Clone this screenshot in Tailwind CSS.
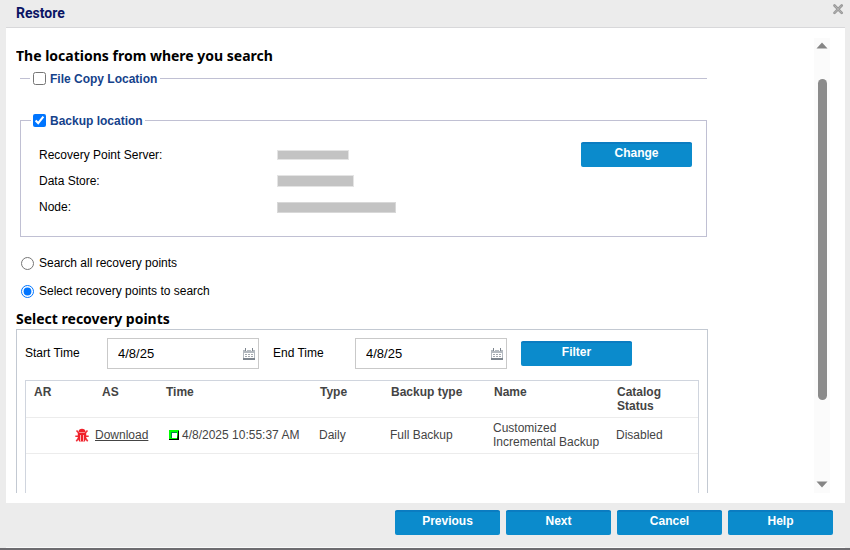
<!DOCTYPE html>
<html lang="en">
<head>
<meta charset="utf-8">
<meta name="viewport" content="width=device-width, initial-scale=1">
<title>Restore</title>
<script src="https://cdn.jsdelivr.net/npm/@tailwindcss/browser@4"></script>
</head>
<body class="font-['Liberation_Sans',Arial,sans-serif] text-xs leading-[14px] text-black">
<div class="flex h-screen flex-col border-b-2 border-[#6d6c70] bg-[#ececec] pr-[5px] pl-1.5">
  <header class="flex h-7 shrink-0 items-start justify-between border-b border-[#d8d8da] pl-2.5">
    <h1 class="pt-[5px] font-[Roboto,sans-serif] text-sm leading-4 font-bold text-[#0a1464]">Restore</h1>
    <button type="button" aria-label="Close" class="pt-[3px]">
      <svg class="block size-3" viewBox="0 0 12 12" fill="none" stroke-linecap="round"><path d="M1.500 2.500l7.200 7.400M8.700 2.500L1.500 9.900" stroke="#999" stroke-width="2.600"/><path d="M1.800 2.800l6.600 6.800M8.400 2.800l-6.600 6.800" stroke="#b4b4b4" stroke-width="1"/></svg>
    </button>
  </header>

  <main class="flex min-h-0 flex-1 bg-white pt-2.5 pr-[15px] pb-2.5 pl-2.5">
    <div class="mr-[106px] flex min-w-0 flex-1 flex-col overflow-hidden pt-2">
      <h2 class="font-['Noto_Sans',sans-serif] text-sm leading-5 font-bold">The locations from where you search</h2>

      <fieldset class="mr-px ml-1 border-t border-[#c0c0d3] pl-2.5">
        <legend class="flex h-6 items-center gap-1 px-[3px] font-bold text-[#15428b]">
          <input id="filecopy" type="checkbox" class="size-[13px]"><label for="filecopy" class="pt-px">File Copy Location</label>
        </legend>
      </fieldset>

      <fieldset class="mt-[18px] mr-px ml-1 border border-[#c0c0d3] pl-2.5">
        <legend class="flex h-6 items-center gap-1 px-0.5 font-bold text-[#15428b]">
          <input id="backup" type="checkbox" checked class="size-[13px]"><label for="backup" class="pt-px">Backup location</label>
        </legend>
        <div class="flex h-[104px] items-start justify-between pt-2.5 pr-3.5 pl-2">
          <dl class="grid grid-cols-[238px_auto] gap-y-3 pt-1.5">
            <dt>Recovery Point Server:</dt><dd class="flex items-center"><span class="h-2.5 w-[72px] border border-[#e4e4e4] bg-[#c3c3c3]"></span></dd>
            <dt>Data Store:</dt><dd class="flex items-center"><span class="h-3 w-[77px] border border-[#e4e4e4] bg-[#c3c3c3]"></span></dd>
            <dt>Node:</dt><dd class="flex items-center"><span class="h-[11px] w-[119px] border border-[#d8d8d8] bg-[#c3c3c3]"></span></dd>
          </dl>
          <button type="button" class="h-[25px] w-[111px] rounded-xs border-t-2 border-[#0b7cc1] bg-[#0b8bcc] pb-1.5 font-bold text-white">Change</button>
        </div>
      </fieldset>

      <div class="mt-[19px] ml-[5px] flex flex-col gap-3.5">
        <label class="flex items-center gap-[5px]"><input type="radio" name="scope" class="size-[13px]">Search all recovery points</label>
        <label class="flex items-center gap-[5px]"><input type="radio" name="scope" checked class="size-[13px]">Select recovery points to search</label>
      </div>

      <h2 class="mt-[11px] font-['Noto_Sans',sans-serif] text-sm leading-5 font-bold">Select recovery points</h2>

      <section class="flex min-h-0 flex-1 flex-col border border-b-0 border-[#c3c9d2] px-2 pt-2">
        <div class="flex shrink-0 items-start">
          <label for="start" class="w-[82px] pt-2">Start Time</label>
          <div class="flex h-[31px] w-[152px] items-center border border-[#c9c9c9] pr-[3px] pl-2.5">
            <input id="start" type="text" value="4/8/25" class="min-w-0 flex-1 text-[13px] outline-none">
            <button type="button" aria-label="Pick start date">
              <svg class="block h-3 w-3" viewBox="0 0 12 12"><path fill="#b4bac0" d="M0 2h12v10H0z"/><path fill="#fff" d="M1 5h10v5H1zM2 1h2v2H2zM8 1h2v2H8z"/><path fill="#7d858e" d="M0 10h12v2H0zM2 0h1v3H2zM9 0h1v3H9z"/><path fill="#a3a8ae" d="M2 6h2v1H2zM5 6h2v1H5zM8 6h2v1H8zM2 8h2v1H2zM5 8h2v1H5zM8 8h2v1H8z"/></svg>
            </button>
          </div>
          <label for="end" class="ml-3.5 w-[82px] pt-2">End Time</label>
          <div class="flex h-[31px] w-[152px] items-center border border-[#c9c9c9] pr-[3px] pl-2.5">
            <input id="end" type="text" value="4/8/25" class="min-w-0 flex-1 text-[13px] outline-none">
            <button type="button" aria-label="Pick end date">
              <svg class="block h-3 w-3" viewBox="0 0 12 12"><path fill="#b4bac0" d="M0 2h12v10H0z"/><path fill="#fff" d="M1 5h10v5H1zM2 1h2v2H2zM8 1h2v2H8z"/><path fill="#7d858e" d="M0 10h12v2H0zM2 0h1v3H2zM9 0h1v3H9z"/><path fill="#a3a8ae" d="M2 6h2v1H2zM5 6h2v1H5zM8 6h2v1H8zM2 8h2v1H2zM5 8h2v1H5zM8 8h2v1H8z"/></svg>
            </button>
          </div>
          <button type="button" class="mt-[3px] ml-3.5 h-[25px] w-[111px] rounded-xs border-t-2 border-[#0b7cc1] bg-[#0b8bcc] pb-1.5 font-bold text-white">Filter</button>
        </div>

        <div class="mt-[11px] min-h-0 flex-1 overflow-hidden border border-b-0 border-[#d0d5de]">
          <table class="w-full table-fixed border-collapse text-left text-[#444]">
            <colgroup><col class="w-[44px]"><col class="w-[88px]"><col class="w-[154px]"><col class="w-[71px]"><col class="w-[103px]"><col class="w-[123px]"><col></colgroup>
            <thead>
              <tr class="h-9 border-b border-[#ececec] align-top">
                <th class="pt-1 pl-2">AR</th><th class="pt-1 pl-8">AS</th><th class="pt-1 pl-2">Time</th><th class="pt-1 pl-2">Type</th><th class="pt-1 pl-2">Backup type</th><th class="pt-1 pl-2">Name</th><th class="pt-1 pl-2">Catalog<br>Status</th>
              </tr>
            </thead>
            <tbody>
              <tr class="h-9 border-b border-[#ececec] align-middle">
                <td></td>
                <td class="pl-[5px]"><div class="flex items-center gap-1.5">
                  <svg class="size-3.5 shrink-0" viewBox="0 0 14 14"><path fill="#f0202a" d="M3.500 4C3.500 2 5 .8 7 .8S10.500 2 10.500 4z"/><path fill="none" stroke="#f0303a" stroke-width="1.600" d="M1.500 2.500L3.800 5M12.500 2.500L10.200 5M.3 8.200h13.400M3.500 10.200l-2.200 3M10.500 10.200l2.200 3"/><path fill="#f0202a" d="M2.800 4.600h8.400v6L9.800 13.600H4.200L2.800 10.600z"/><path fill="#fbb4b8" d="M5 7h1v6.600H5zM8 7h1v6.600H8z"/></svg>
                  <a href="#" class="underline">Download</a></div></td>
                <td class="pl-[11px]"><div class="flex items-center gap-[3px] whitespace-nowrap">
                  <svg class="size-2.5 shrink-0" viewBox="0 0 10 10"><path fill="#000" d="M0 0h10v10H0z"/><path fill="#0f0" d="M0 0h10L8 9H0z"/><path fill="#000" d="M9 1h1v9H1V9h8z"/><path fill="#084" d="M2 2h6v6H2z"/><path fill="#fff" d="M3 3h5v5H3z"/></svg>
                  <span>4/8/2025 10:55:37 AM</span></div></td>
                <td class="pl-[7px]">Daily</td>
                <td class="pl-[7px]">Full Backup</td>
                <td class="pl-[7px] whitespace-nowrap">Customized<br>Incremental Backup</td>
                <td class="pl-[7px]">Disabled</td>
              </tr>
            </tbody>
          </table>
        </div>
      </section>
    </div>

    <div class="flex w-4 shrink-0 flex-col items-center bg-[#fbfbfb] pt-1 pb-[5px]">
      <svg class="h-[7px] w-3 shrink-0" viewBox="0 0 12 7"><path fill="#858585" d="M6 .5L11.500 6.500H.5z"/></svg>
      <div class="mt-[30px] h-[321px] w-[9px] rounded-full bg-[#8b8b8b]"></div>
      <svg class="mt-auto h-[7px] w-3 shrink-0" viewBox="0 0 12 7"><path fill="#858585" d="M6 6.500L.5.5h11z"/></svg>
    </div>
  </main>

  <footer class="flex h-[45px] shrink-0 justify-end gap-1.5 border-b border-[#fafafa] pt-[7px] pr-3 font-bold text-white">
    <button type="button" class="h-[25px] w-[105px] rounded-xs border-t-2 border-[#0b7cc1] bg-[#0b8bcc] pb-1.5">Previous</button>
    <button type="button" class="h-[25px] w-[105px] rounded-xs border-t-2 border-[#0b7cc1] bg-[#0b8bcc] pb-1.5">Next</button>
    <button type="button" class="h-[25px] w-[105px] rounded-xs border-t-2 border-[#0b7cc1] bg-[#0b8bcc] pb-1.5">Cancel</button>
    <button type="button" class="h-[25px] w-[105px] rounded-xs border-t-2 border-[#0b7cc1] bg-[#0b8bcc] pb-1.5">Help</button>
  </footer>
</div>
</body>
</html>
